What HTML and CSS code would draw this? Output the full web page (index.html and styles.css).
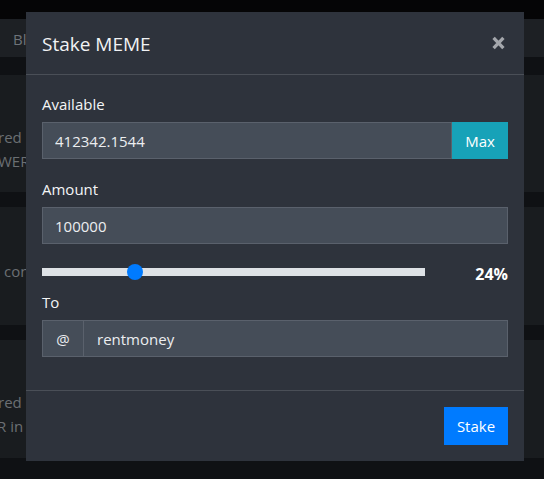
FILE: index.html
```html
<!DOCTYPE html>
<html lang="en">
<head>
<meta charset="utf-8">
<title>Stake MEME</title>
<link rel="stylesheet" href="styles.css">
</head>
<body>
<div class="page">
  <div class="topstrip"></div>
  <nav class="navbar"><span class="brand">Blurt</span></nav>
  <main class="content">
    <section class="card card-one">
      <p class="line">red</p>
      <p class="line">WER</p>
    </section>
    <section class="card card-two">
      <p class="line line-con">con</p>
    </section>
    <section class="card card-three">
      <p class="line">red</p>
      <p class="line line-rin">R in</p>
    </section>
  </main>
</div>

<div class="modal-layer">
  <div class="modal">
    <header class="modal-header">
      <h5 class="modal-title">Stake MEME</h5>
      <button class="close" type="button" aria-label="Close">
        <svg width="13" height="14" viewBox="0 0 13 14" aria-hidden="true">
          <path d="M1.6 1.8 L11.4 12.2 M11.4 1.8 L1.6 12.2" stroke="#a4a7ac" stroke-width="3.3" stroke-linecap="butt" fill="none"/>
        </svg>
      </button>
    </header>
    <div class="modal-body">
      <div class="group">
        <label class="label">Available</label>
        <div class="input-group">
          <input class="field" type="text" value="412342.1544">
          <button class="btn-max" type="button">Max</button>
        </div>
      </div>
      <div class="group">
        <label class="label">Amount</label>
        <input class="field" type="text" value="100000">
      </div>
      <div class="slider-row">
        <input class="slider" type="range" min="0" max="100" step="0.1" value="23.2">
        <span class="percent">24%</span>
      </div>
      <div class="group group-to">
        <label class="label">To</label>
        <div class="input-group">
          <span class="prepend">@</span>
          <input class="field field-to" type="text" value="rentmoney">
        </div>
      </div>
    </div>
    <footer class="modal-footer">
      <button class="btn-stake" type="button">Stake</button>
    </footer>
  </div>
</div>
</body>
</html>
```

FILE: styles.css
```css
* { box-sizing: border-box; }

html, body {
  margin: 0;
  padding: 0;
  height: 100%;
  overflow: hidden;
  background: #0f1114;
  font-family: "Open Sans", "Noto Sans", sans-serif;
  font-size: 15px;
  line-height: 24px;
}

.page {
  display: flex;
  flex-direction: column;
}

.topstrip {
  height: 19px;
  background: #050506;
}

.navbar {
  height: 38px;
  background: #1d2024;
  display: flex;
  align-items: center;
  padding-left: 13px;
  padding-top: 2px;
}

.brand {
  color: #6e7379;
  font-size: 15px;
}

.content {
  display: flex;
  flex-direction: column;
  gap: 15px;
  padding-top: 18px;
}

.card {
  background: #191c1f;
  margin: 0;
}

.line {
  margin: 0 0 0 -2px;
  color: #6b6f73;
  font-size: 15px;
  line-height: 24px;
}

.card-one { height: 117px; padding-top: 50px; }
.card-two { height: 118px; padding-top: 52px; }
.card-three { height: 118px; padding-top: 50px; }

.line-con { margin-left: 4px; }
.line-rin { margin-left: -3px; }

/* modal overlay */
.modal-layer {
  position: fixed;
  inset: 0;
  padding: 12px 0 0 26px;
}

.modal {
  width: 498px;
  background: #2e333c;
  color: #eef0f2;
  display: flex;
  flex-direction: column;
}

.modal-header {
  display: flex;
  align-items: center;
  justify-content: space-between;
  padding: 16px 16px;
  border-bottom: 1px solid #4a4f57;
  height: 63px;
}

.modal-title {
  margin: 0;
  font-size: 19px;
  font-weight: 400;
  line-height: 30px;
  padding-top: 1px;
  color: #f1f2f4;
}

.close {
  background: none;
  border: 0;
  padding: 0;
  margin-right: 3px;
  display: flex;
  align-items: center;
}

.modal-body {
  padding: 16px 16px 33px;
  display: flex;
  flex-direction: column;
}

.group {
  display: flex;
  flex-direction: column;
  margin-bottom: 17px;
}

.group-to { margin-bottom: 0; }

.label {
  display: block;
  line-height: 24px;
  margin-bottom: 7px;
  padding-top: 1px;
  height: 24px;
  color: #f4f5f6;
}

.input-group {
  display: flex;
}

.field {
  height: 37px;
  width: 100%;
  flex: 1 1 auto;
  min-width: 0;
  background: #454d58;
  border: 1px solid #5a616c;
  color: #eceef0;
  font-family: inherit;
  font-size: 15px;
  padding: 0 12px;
  margin: 0;
  outline: none;
}

.btn-max {
  height: 37px;
  width: 56px;
  flex: 0 0 56px;
  background: #17a2b8;
  border: 0;
  color: #ffffff;
  font-family: inherit;
  font-size: 15px;
  padding: 0;
}

.slider-row {
  display: flex;
  align-items: center;
  height: 16px;
  margin-top: 3px;
  margin-bottom: 9px;
}

.slider {
  -webkit-appearance: none;
  appearance: none;
  width: 383px;
  height: 16px;
  margin: 0;
  padding: 0;
  background: transparent;
}

.slider::-webkit-slider-runnable-track {
  height: 8px;
  background: #dee2e6;
  border: 0;
}

.slider::-webkit-slider-thumb {
  -webkit-appearance: none;
  appearance: none;
  width: 16px;
  height: 16px;
  border-radius: 50%;
  background: #007bff;
  border: 0;
  margin-top: -4px;
}

.percent {
  margin-left: auto;
  font-weight: 700;
  font-size: 16px;
  color: #ffffff;
  padding-top: 4px;
}

.prepend {
  height: 37px;
  width: 41px;
  flex: 0 0 41px;
  display: flex;
  align-items: center;
  justify-content: center;
  background: #454d58;
  border: 1px solid #5a616c;
  border-right: 0;
  color: #eceef0;
}

.field-to {
  padding-left: 13px;
}

.modal-footer {
  display: flex;
  justify-content: flex-end;
  padding: 16px;
  border-top: 1px solid #4a4f57;
}

.btn-stake {
  height: 38px;
  width: 64px;
  background: #007bff;
  border: 0;
  color: #ffffff;
  font-family: inherit;
  font-size: 15px;
  padding: 0;
}
```
